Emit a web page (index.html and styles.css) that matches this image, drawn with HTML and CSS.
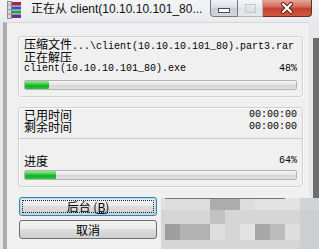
FILE: index.html
```html
<!DOCTYPE html>
<html lang="zh-CN">
<head>
    <meta charset="UTF-8">
    <title>正在从 client(10.10.10.101_80).part3.rar</title>
    <link rel="stylesheet" href="styles.css">
</head>
<body>
    <div class="window">
        <!-- Title bar -->
        <div class="titlebar">
            <svg class="app-icon" width="16" height="18" viewBox="0 0 16 18">
                <rect x="4" y="1" width="11" height="4" fill="#a3234c"/>
                <rect x="4" y="5" width="11" height="4" fill="#2f57c6"/>
                <rect x="4" y="9" width="11" height="4" fill="#25a33f"/>
                <rect x="4" y="13" width="11" height="4" fill="#6c2d8c"/>
                <path d="M4 5H15M4 9H15M4 13H15" stroke="#fff" stroke-width="0.8"/>
                <rect x="1.5" y="0.5" width="4" height="17" fill="#d6d6d6" stroke="#7a7a7a" stroke-width="0.8"/>
                <path d="M1.5 4H5.5M1.5 8.5H5.5M1.5 13H5.5" stroke="#8a8a8a" stroke-width="0.8"/>
            </svg>
            <span class="title">正在从 client(10.10.10.101_80...</span>
            <div class="caption">
                <span class="cap min">
                    <svg width="12" height="5" viewBox="0 0 12 5"><rect x="0.5" y="0.5" width="11" height="4" fill="#fff" stroke="#4a4f58"/></svg>
                </span>
                <span class="cap max">
                    <svg width="11" height="9" viewBox="0 0 11 9"><rect x="0.5" y="0.5" width="10" height="8" fill="none" stroke="#c3c7cd"/><rect x="2.5" y="3" width="6" height="4" fill="none" stroke="#d9dce0"/></svg>
                </span>
                <span class="cap close">
                    <svg width="14" height="12" viewBox="0 0 14 12">
                        <path d="M3 2L11 10M11 2L3 10" stroke="#5a1b14" stroke-width="4" stroke-linecap="round"/>
                        <path d="M3 2L11 10M11 2L3 10" stroke="#fff" stroke-width="2.2" stroke-linecap="round"/>
                    </svg>
                </span>
            </div>
        </div>

        <div class="frame">
            <div class="client">
                <!-- Current file -->
                <div class="panel">
                    <div class="row"><span><span class="c">压缩文件</span>...\client(10.10.10.101_80).part3.rar</span></div>
                    <div class="row"><span class="c">正在解压</span></div>
                    <div class="row"><span>client(10.10.10.101_80).exe</span><span>48%</span></div>
                    <div class="bar"><div class="fill" style="width:24px"></div></div>
                </div>

                <!-- Time and total progress -->
                <div class="panel panel-gap">
                    <div class="times">
                        <div class="row"><span class="c">已用时间</span><span>00:00:00</span></div>
                        <div class="row"><span class="c">剩余时间</span><span>00:00:00</span></div>
                    </div>
                    <div class="total">
                        <div class="row"><span class="c">进度</span><span>64%</span></div>
                        <div class="bar"><div class="fill" style="width:31px"></div></div>
                    </div>
                </div>

                <!-- Buttons -->
                <div class="actions">
                    <button class="btn focus">后台 (<u>B</u>)</button>
                    <button class="btn">取消</button>
                </div>
            </div>
            <div class="edge"></div>
        </div>

        <!-- Pixelated area over the right-hand buttons -->
        <div class="mosaic">
            <span class="b1"></span><span class="s1 t"></span><span class="s1 t"></span><span class="s1 t"></span><span class="s5 t"></span><span class="s5 t"></span><span class="s1 t"></span><span class="s2 t"></span><span class="s2 t"></span><span class="s2"></span><span class="b2"></span><span class="b2"></span>
            <span class="b2"></span><span class="s3"></span><span class="s3"></span><span class="s3"></span><span class="s4"></span><span class="s3"></span><span class="s3"></span><span class="s3"></span><span class="s3"></span><span class="s3"></span><span class="b3"></span><span class="b3"></span>
            <span class="s3"></span><span class="s7"></span><span class="s6"></span><span class="s6"></span><span class="s1"></span><span class="s3"></span><span class="s2"></span><span class="s8"></span><span class="s9"></span><span class="s1"></span><span class="b3"></span><span class="b3"></span>
            <span class="s3"></span><span class="s3"></span><span class="s3"></span><span class="s3"></span><span class="s3"></span><span class="s3"></span><span class="s3"></span><span class="s3"></span><span class="s3"></span><span class="s3"></span><span class="b3"></span><span class="b3"></span>
        </div>
    </div>
</body>
</html>
```

FILE: styles.css
```css
* {
    box-sizing: border-box;
}
body {
    margin: 0;
    width: 319px;
    height: 249px;
    overflow: hidden;
    background: #6d6d6d;
    font-family: "Noto Sans CJK SC", sans-serif;
}
.window {
    position: relative;
    width: 319px;
    height: 249px;
    background: #e6e8eb;
}

/* title bar */
.titlebar {
    height: 22px;
    display: flex;
    align-items: flex-start;
    background: linear-gradient(#f3f4f6, #e9ebee);
}
.app-icon {
    margin: 1px 0 0 6px;
}
.title {
    margin: 1px 0 0 9px;
    font: 12px/16px "Liberation Sans", "Noto Sans CJK SC", sans-serif;
    color: #111;
}
.caption {
    margin-left: auto;
    margin-right: 7px;
    display: flex;
}
.cap {
    height: 17px;
    display: flex;
    align-items: center;
    justify-content: center;
    border: 1px solid #767b83;
    border-top: none;
}
.min {
    width: 28px;
    border-bottom-left-radius: 4px;
    padding-top: 5px;
    background: linear-gradient(#eef1f4, #dde2e8 45%, #c6cdd6 50%, #d3d9e0);
}
.max {
    width: 25px;
    border-left: none;
    border-color: #b4b8be;
    background: linear-gradient(#f3f5f7, #e9ecef 45%, #dfe3e7 50%, #e6e9ec);
}
.close {
    width: 49px;
    border-left: none;
    border-color: #6b2a22;
    border-bottom-right-radius: 4px;
    background: linear-gradient(#e8a599, #d0675a 45%, #c2402f 50%, #cd5a43);
}

/* window body */
.frame {
    display: flex;
    height: 227px;
}
.client {
    width: 306px;
    margin-left: 3px;
    border-left: 4px solid #acacac;
    border-top: 1px solid #d6d8db;
    background: #f0f0f0;
    padding: 13px 6px 0 11px;
}
.edge {
    flex: 1;
    background: linear-gradient(#e6e8eb 0 16px, transparent 16px),
                linear-gradient(to right, #e6e8eb 0 4px, #6d6d6d 4px);
}

.panel {
    border: 1px solid #cfd2d5;
    border-radius: 3px;
    box-shadow: inset 1px 1px #fbfbfb, 1px 1px #fbfbfb;
    padding: 2px 5px 6px 5px;
}
.panel-gap {
    margin-top: 10px;
    padding: 0;
}
.times {
    padding: 1px 5px 5px 5px;
    border-bottom: 1px solid #c9cccf;
}
.total {
    padding: 16px 5px 6px 5px;
}
.row {
    display: flex;
    justify-content: space-between;
    align-items: center;
    height: 12px;
    font: 10px/12px "Liberation Mono", "Noto Sans CJK SC", monospace;
    color: #000;
    white-space: nowrap;
}
.c {
    font: 12px/12px "Noto Sans CJK SC", sans-serif;
    color: #000;
}
.bar {
    margin-top: 5px;
    height: 10px;
    border: 1px solid #b3b3b3;
    border-radius: 2px;
    background: linear-gradient(#f7f7f7, #e6e6e6 45%, #d6d6d6 55%, #e2e2e2);
}
.total .bar {
    margin-top: 3px;
}
.fill {
    height: 100%;
    border-radius: 1px;
    background: linear-gradient(#9fe59f, #3ccb40 40%, #0bb12a 60%, #2fc443);
}

/* buttons */
.actions {
    margin: 10px 0 0 1px;
    width: 138px;
    display: flex;
    flex-direction: column;
    gap: 4px;
}
.btn {
    position: relative;
    height: 19px;
    padding: 0;
    border: 1px solid #707070;
    border-radius: 3px;
    background: linear-gradient(#f2f2f2, #ebebeb 45%, #dddddd 50%, #cfcfcf);
    font: 12px/17px "Noto Sans CJK SC", sans-serif;
    color: #000;
}
.btn u {
    text-decoration: underline;
}
.btn.focus {
    border-color: #3c7fb1;
    box-shadow: inset 0 0 0 1px #a8dcf3;
}
.btn.focus::after {
    content: "";
    position: absolute;
    inset: 2px;
    border: 1px dotted #222;
}

/* pixelated overlay */
.mosaic {
    position: absolute;
    left: 161px;
    top: 198px;
    display: grid;
    grid-template-columns: 4px repeat(10, 15px) 4px;
    grid-template-rows: 12px 14px 16px 9px;
}
.t {
    box-shadow: inset 0 1px #767676;
}
.s1 { background: #dedede; }
.s2 { background: #e3e3e3; }
.s3 { background: #d6d6d6; }
.s4 { background: #c2c2c2; }
.s5 { background: #adadad; }
.s6 { background: #b2b2b2; }
.s7 { background: #9e9e9e; }
.s8 { background: #a8a8a8; }
.s9 { background: #bcbcbc; }
.b1 { background: #dfe3e6; }
.b2 { background: #d0d4d6; }
.b3 { background: #cbcfd1; }
```
